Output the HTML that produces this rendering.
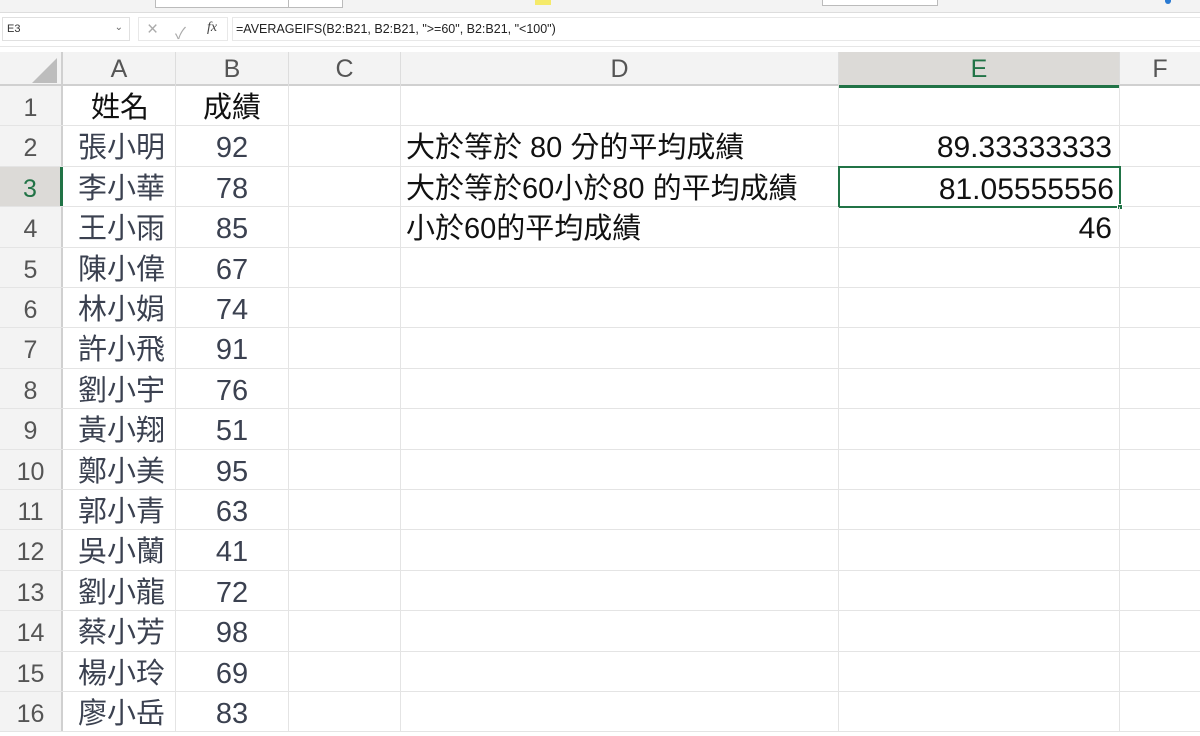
<!DOCTYPE html>
<html><head><meta charset="utf-8">
<style>
*{box-sizing:border-box;margin:0;padding:0}
body{width:1200px;height:717px;overflow:hidden;background:#fff;font-family:"Liberation Sans","Noto Sans CJK TC",sans-serif;position:relative}
.top{position:absolute;left:0;top:0;width:1200px;height:13px;background:#f3f3f3;border-bottom:1px solid #ddd}
.fb{position:absolute;top:13px;left:0;width:1200px;height:34px;background:#fff;border-bottom:1px solid #e6e6e6}
.nb{position:absolute;left:2px;top:4px;width:128px;height:24px;border:1px solid #e0e0e0;font-size:11px;color:#333;padding:5px 4px}
.fx{position:absolute;left:138px;top:4px;width:90px;height:24px;border:1px solid #e8e8e8;color:#999;font-size:16px}
.ff{position:absolute;left:232px;top:4px;width:968px;height:24px;border:1px solid #e8e8e8;border-right:none;font-size:12.5px;color:#222;padding:4px 3px}
.hdr{position:absolute;top:52px;left:0;width:1200px;height:34px;background:#f3f3f3;border-bottom:2px solid #d0d0d0}
.ch{position:absolute;top:0;height:34px;font-size:25px;color:#555;text-align:center;line-height:34px;border-right:1px solid #ddd}
.rows{position:absolute;top:86px;left:0;width:1200px}
.r{position:absolute;left:0;width:1200px;height:40.4px;border-bottom:1px solid #e4e4e4}
.rh{position:absolute;left:0;width:63px;height:100%;background:#f3f3f3;border-right:2px solid #d0d0d0;color:#555;font-size:25px;text-align:center;line-height:44px}
.c{position:absolute;top:0;height:100%;font-size:29px;line-height:44px;border-right:1px solid #e4e4e4;white-space:nowrap}
.a{left:63px;width:113px;color:#3b4150;padding-left:15px}
.b{left:176px;width:113px;color:#3b4150;text-align:center}
.cc{left:289px;width:112px}
.d{left:401px;width:438px;color:#111;padding-left:5px}
.e{left:839px;width:281px;color:#111;text-align:right;padding-right:7px;font-size:30px}
.f{left:1120px;width:80px;border-right:none}
</style></head><body>
<div class="top">
<div style="position:absolute;left:155px;top:-2px;width:188px;height:10px;border:1px solid #bbb;background:#fff"></div>
<div style="position:absolute;left:288px;top:0;width:1px;height:8px;background:#bbb"></div>
<div style="position:absolute;left:535px;top:0;width:16px;height:5px;background:#f5ea6a"></div>
<div style="position:absolute;left:822px;top:-2px;width:116px;height:8px;border:1px solid #bbb;background:#fff"></div>
<div style="position:absolute;left:1165px;top:0;width:6px;height:4px;background:#2a7ad2;border-radius:0 0 3px 3px"></div>
</div>
<div class="fb">
<div class="nb">E3<span style="position:absolute;right:6px;top:4px;font-size:10px;color:#666">⌄</span></div>
<div class="fx"><span style="position:absolute;left:8px;top:1px;font-size:19px;color:#aaa">×</span><span style="position:absolute;left:36px;top:2px;font-size:16px;color:#aaa">✓</span><span style="position:absolute;left:68px;top:2px;font-family:'Liberation Serif',serif;font-style:italic;font-size:14px;color:#444">fx</span></div>
<div class="ff">=AVERAGEIFS(B2:B21, B2:B21, "&gt;=60", B2:B21, "&lt;100")</div>
</div>
<div class="hdr">
<div class="ch" style="left:0;width:63px;border-right:2px solid #d0d0d0"><div style="position:absolute;right:4px;bottom:3px;width:0;height:0;border-left:25px solid transparent;border-bottom:25px solid #bdbdbd"></div></div>
<div class="ch" style="left:63px;width:113px">A</div>
<div class="ch" style="left:176px;width:113px">B</div>
<div class="ch" style="left:289px;width:112px">C</div>
<div class="ch" style="left:401px;width:438px">D</div>
<div class="ch" style="left:839px;width:281px;background:#dcdad7;color:#217346;border-bottom:3px solid #217346;height:36px">E</div>
<div class="ch" style="left:1120px;width:80px;border:none">F</div>
</div>
<div class="rows">
<div class="r" style="top:0"><div class="rh">1</div><div class="c a" style="color:#111;padding-left:28px">姓名</div><div class="c b" style="color:#111">成績</div><div class="c cc"></div><div class="c d"></div><div class="c e"></div><div class="c f"></div></div>
<div class="r" style="top:40.4px"><div class="rh">2</div><div class="c a">張小明</div><div class="c b">92</div><div class="c cc"></div><div class="c d">大於等於 80 分的平均成績</div><div class="c e">89.33333333</div><div class="c f"></div></div>
<div class="r" style="top:80.8px"><div class="rh" style="background:#dcdad7;color:#217346;border-right:3px solid #217346">3</div><div class="c a">李小華</div><div class="c b">78</div><div class="c cc"></div><div class="c d">大於等於60小於80 的平均成績</div><div class="c e" style="border:2px solid #217346;top:-1px;height:42px;line-height:44px;padding-right:5px;left:838px;width:283px">81.05555556<div style="position:absolute;right:-4px;bottom:-4px;width:6px;height:6px;background:#217346;border:1px solid #fff"></div></div><div class="c f"></div></div>
<div class="r" style="top:121.2px"><div class="rh">4</div><div class="c a">王小雨</div><div class="c b">85</div><div class="c cc"></div><div class="c d">小於60的平均成績</div><div class="c e">46</div><div class="c f"></div></div>
<div class="r" style="top:161.6px"><div class="rh">5</div><div class="c a">陳小偉</div><div class="c b">67</div><div class="c cc"></div><div class="c d"></div><div class="c e"></div><div class="c f"></div></div>
<div class="r" style="top:202px"><div class="rh">6</div><div class="c a">林小娟</div><div class="c b">74</div><div class="c cc"></div><div class="c d"></div><div class="c e"></div><div class="c f"></div></div>
<div class="r" style="top:242.4px"><div class="rh">7</div><div class="c a">許小飛</div><div class="c b">91</div><div class="c cc"></div><div class="c d"></div><div class="c e"></div><div class="c f"></div></div>
<div class="r" style="top:282.8px"><div class="rh">8</div><div class="c a">劉小宇</div><div class="c b">76</div><div class="c cc"></div><div class="c d"></div><div class="c e"></div><div class="c f"></div></div>
<div class="r" style="top:323.2px"><div class="rh">9</div><div class="c a">黃小翔</div><div class="c b">51</div><div class="c cc"></div><div class="c d"></div><div class="c e"></div><div class="c f"></div></div>
<div class="r" style="top:363.6px"><div class="rh">10</div><div class="c a">鄭小美</div><div class="c b">95</div><div class="c cc"></div><div class="c d"></div><div class="c e"></div><div class="c f"></div></div>
<div class="r" style="top:404px"><div class="rh">11</div><div class="c a">郭小青</div><div class="c b">63</div><div class="c cc"></div><div class="c d"></div><div class="c e"></div><div class="c f"></div></div>
<div class="r" style="top:444.4px"><div class="rh">12</div><div class="c a">吳小蘭</div><div class="c b">41</div><div class="c cc"></div><div class="c d"></div><div class="c e"></div><div class="c f"></div></div>
<div class="r" style="top:484.8px"><div class="rh">13</div><div class="c a">劉小龍</div><div class="c b">72</div><div class="c cc"></div><div class="c d"></div><div class="c e"></div><div class="c f"></div></div>
<div class="r" style="top:525.2px"><div class="rh">14</div><div class="c a">蔡小芳</div><div class="c b">98</div><div class="c cc"></div><div class="c d"></div><div class="c e"></div><div class="c f"></div></div>
<div class="r" style="top:565.6px"><div class="rh">15</div><div class="c a">楊小玲</div><div class="c b">69</div><div class="c cc"></div><div class="c d"></div><div class="c e"></div><div class="c f"></div></div>
<div class="r" style="top:606px"><div class="rh">16</div><div class="c a">廖小岳</div><div class="c b">83</div><div class="c cc"></div><div class="c d"></div><div class="c e"></div><div class="c f"></div></div>
</div>
</body></html>
